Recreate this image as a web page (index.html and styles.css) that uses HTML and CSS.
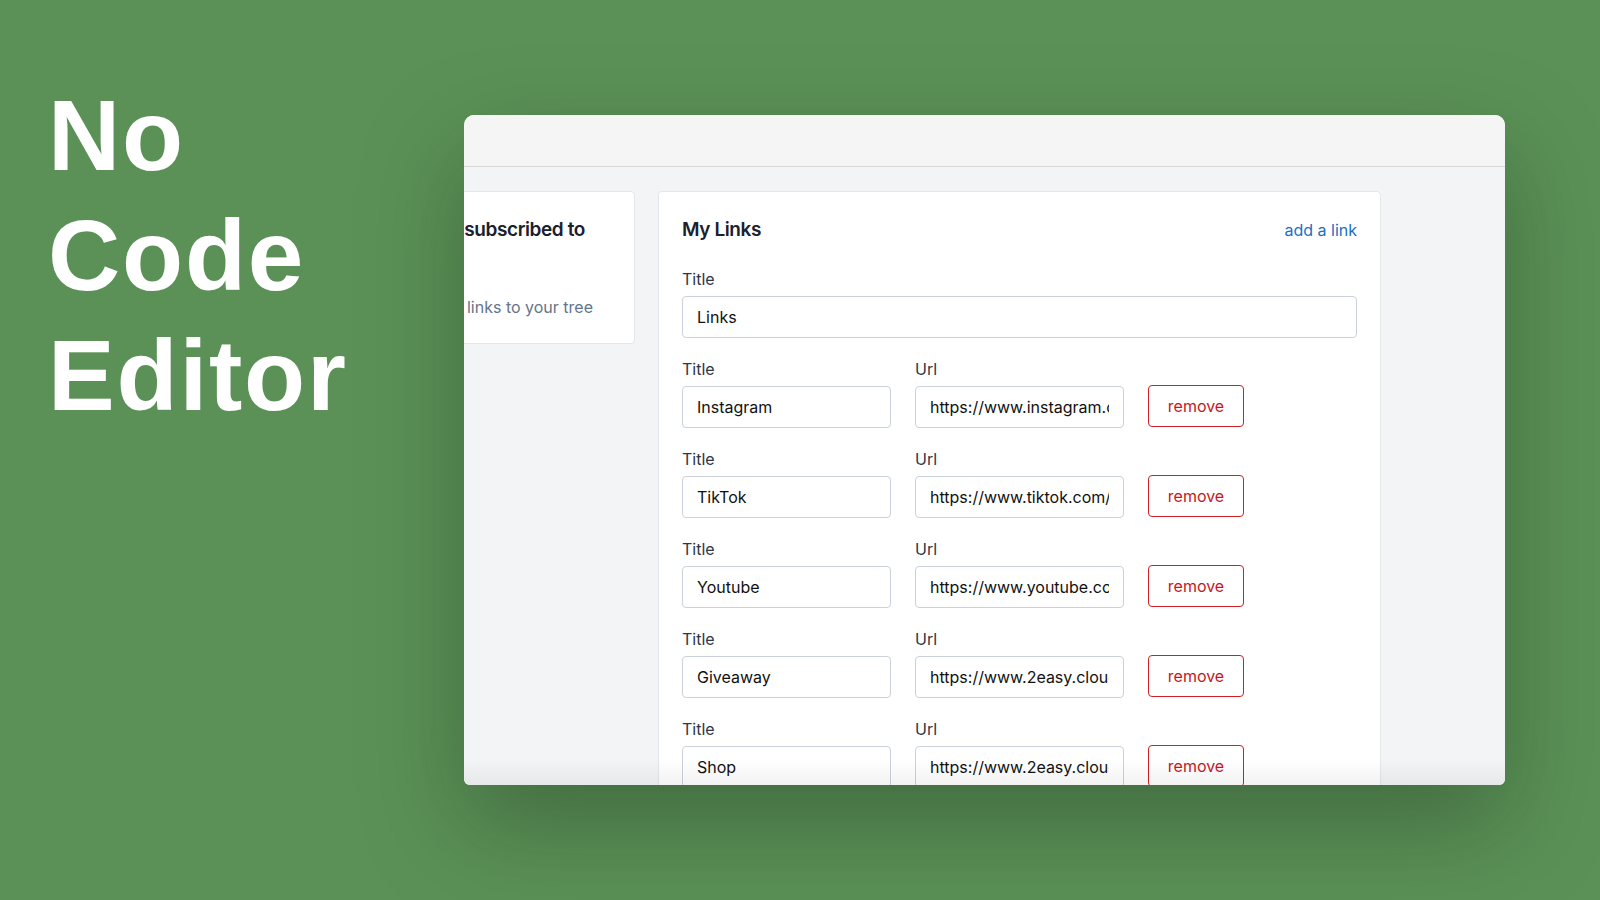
FILE: index.html
```html
<!DOCTYPE html>
<html lang="en">
<head>
<meta charset="utf-8">
<title>No Code Editor</title>
<link rel="stylesheet" href="styles.css">
</head>
<body>
<div class="page">
  <h1 class="hero">No<br>Code<br>Editor</h1>
  <div class="window">
    <div class="titlebar"></div>
    <div class="content">
      <section class="card side-card">
        <h2 class="card-title">Links you've subscribed to</h2>
        <p class="muted">Use this to add links to your tree</p>
      </section>
      <section class="card links-card">
        <div class="card-head">
          <h2 class="card-title">My Links</h2>
          <a class="add-link" href="#">add a link</a>
        </div>
        <div class="group">
          <label class="label">Title</label>
          <input class="field" type="text" value="Links" readonly>
        </div>
        <div class="row">
          <div class="group"><label class="label">Title</label><input class="field" type="text" value="Instagram" readonly></div>
          <div class="group"><label class="label">Url</label><input class="field" type="text" value="https://www.instagram.com/" readonly></div>
          <button class="remove" type="button">remove</button>
        </div>
        <div class="row">
          <div class="group"><label class="label">Title</label><input class="field" type="text" value="TikTok" readonly></div>
          <div class="group"><label class="label">Url</label><input class="field" type="text" value="https://www.tiktok.com/" readonly></div>
          <button class="remove" type="button">remove</button>
        </div>
        <div class="row">
          <div class="group"><label class="label">Title</label><input class="field" type="text" value="Youtube" readonly></div>
          <div class="group"><label class="label">Url</label><input class="field" type="text" value="https://www.youtube.com/" readonly></div>
          <button class="remove" type="button">remove</button>
        </div>
        <div class="row">
          <div class="group"><label class="label">Title</label><input class="field" type="text" value="Giveaway" readonly></div>
          <div class="group"><label class="label">Url</label><input class="field" type="text" value="https://www.2easy.cloud/" readonly></div>
          <button class="remove" type="button">remove</button>
        </div>
        <div class="row">
          <div class="group"><label class="label">Title</label><input class="field" type="text" value="Shop" readonly></div>
          <div class="group"><label class="label">Url</label><input class="field" type="text" value="https://www.2easy.cloud/shop" readonly></div>
          <button class="remove" type="button">remove</button>
        </div>
      </section>
    </div>
  </div>
</div>
</body>
</html>
```
FILE: styles.css
```css
html, body {
  margin: 0;
  padding: 0;
}
body {
  width: 1600px;
  height: 900px;
  overflow: hidden;
  background: #5b9157;
  font-family: "Inter", "Noto Sans", sans-serif;
}
.page {
  display: flex;
  align-items: flex-start;
  padding-left: 48px;
}
.hero {
  width: 416px;
  margin: 75px 0 0 0;
  font-family: "Liberation Sans", Arial, sans-serif;
  font-weight: 700;
  font-size: 100px;
  line-height: 120px;
  letter-spacing: 1.8px;
  color: #ffffff;
}
.window {
  position: relative;
  width: 1041px;
  height: 670px;
  margin-top: 115px;
  border-radius: 10px 10px 6px 6px;
  overflow: hidden;
  display: flex;
  flex-direction: column;
  background: #f3f4f6;
  box-shadow: 0 40px 100px rgba(20, 40, 20, 0.35);
}
.window::after {
  content: "";
  position: absolute;
  left: 0;
  right: 0;
  bottom: 0;
  height: 26px;
  background: linear-gradient(to bottom, rgba(0, 0, 0, 0), rgba(0, 0, 0, 0.05));
  pointer-events: none;
}
.titlebar {
  flex: none;
  height: 51px;
  background: #f5f5f6;
  border-bottom: 1px solid #d5d7da;
}
.content {
  flex: 1;
  min-height: 0;
  display: flex;
  align-items: flex-start;
  gap: 23px;
  padding-top: 24px;
  background: #f3f4f6;
}
.card {
  flex: none;
  background: #ffffff;
  border: 1px solid #e3e6ea;
  border-radius: 4px;
  box-sizing: border-box;
}
.side-card {
  width: 310px;
  margin-left: -139px;
  padding: 24px 23px 24px 23px;
}
.links-card {
  width: 723px;
  padding: 24px 23px 23px 23px;
}
.card-title {
  margin: 0;
  font-size: 19px;
  line-height: 28px;
  font-weight: 600;
  letter-spacing: -0.4px;
  color: #1a202c;
  white-space: nowrap;
}
.muted {
  margin: 51px 0 0 0;
  font-size: 16px;
  line-height: 24px;
  color: #64748b;
  white-space: nowrap;
}
.card-head {
  display: flex;
  justify-content: space-between;
  align-items: baseline;
  margin-bottom: 23px;
}
.add-link {
  font-size: 16px;
  line-height: 28px;
  color: #1a6fc2;
  text-decoration: none;
}
.group {
  display: flex;
  flex-direction: column;
  margin-bottom: 19px;
}
.row {
  display: grid;
  grid-template-columns: 209px 209px 96px;
  column-gap: 24px;
  align-items: end;
  margin-bottom: 19px;
}
.row .group {
  margin-bottom: 0;
}
.label {
  font-size: 16px;
  line-height: 24px;
  color: #2d3748;
  margin-bottom: 5px;
}
.field {
  display: block;
  width: 100%;
  height: 42px;
  box-sizing: border-box;
  margin: 0;
  padding: 0 14px;
  border: 1px solid #cad1da;
  border-radius: 4px;
  background: #ffffff;
  font-family: "Inter", "Noto Sans", sans-serif;
  font-size: 16px;
  color: #111111;
  outline: none;
}
.remove {
  height: 42px;
  margin: 0 0 1px 0;
  padding: 0;
  border: 1px solid #cf2027;
  border-radius: 4px;
  background: #ffffff;
  color: #c8161e;
  font-family: "Inter", "Noto Sans", sans-serif;
  font-size: 16px;
  cursor: pointer;
}
```
